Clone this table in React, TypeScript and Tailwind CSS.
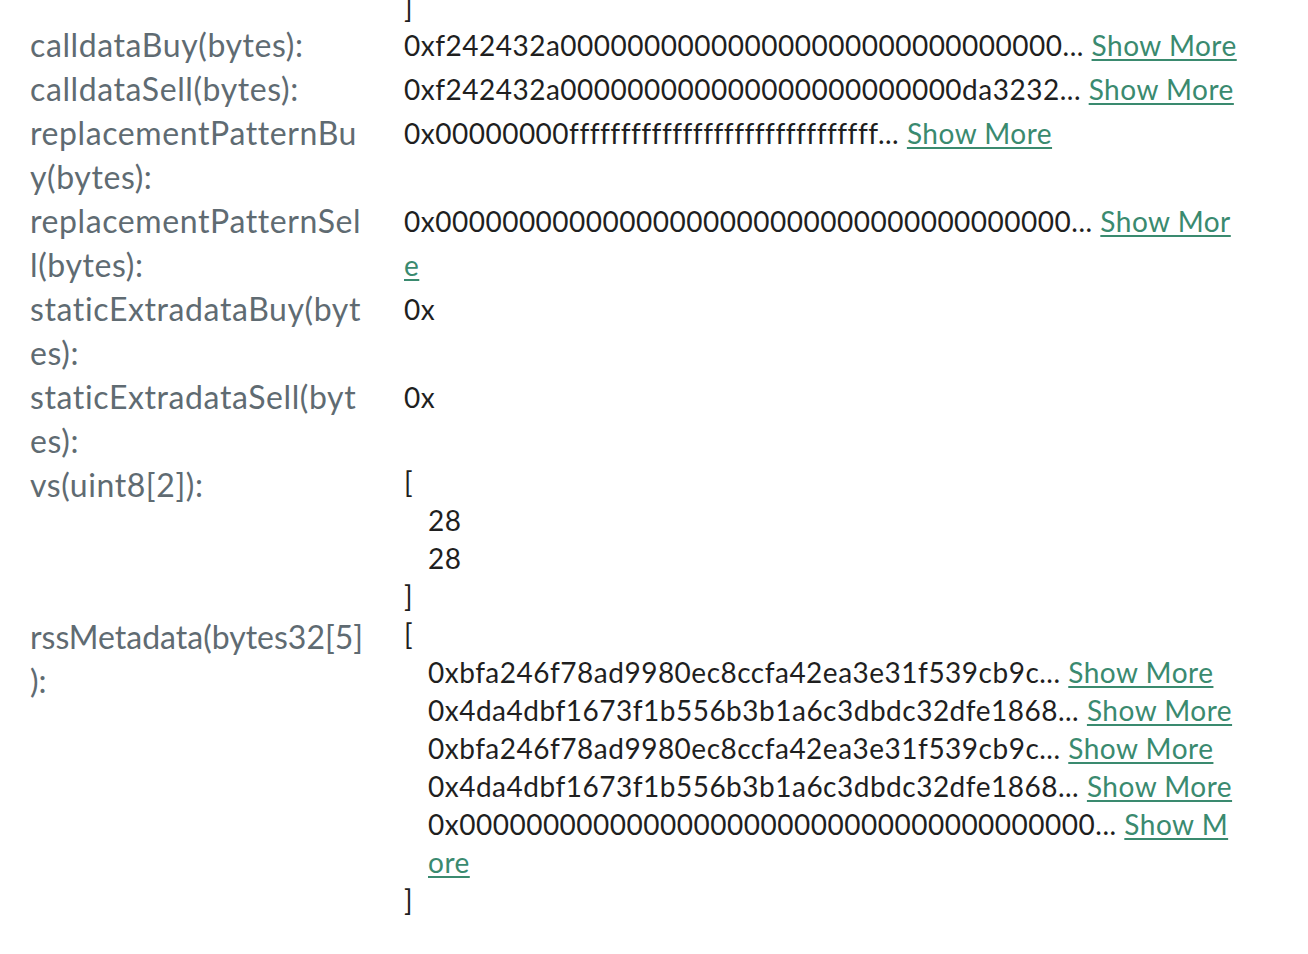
const zeros = (n: number) => '0'.repeat(n);

type Param = {
  label: string;
  value: string | string[];
  tight?: boolean;
};

const params: Param[] = [
  { label: 'calldataBuy(bytes):', value: '0xf242432a' + zeros(54) + '1f2c3a9b' },
  { label: 'calldataSell(bytes):', value: '0xf242432a' + zeros(24) + 'da3232b6c4' + zeros(20) },
  { label: 'replacementPatternBuy(bytes):', value: '0x00000000' + 'f'.repeat(56) },
  { label: 'replacementPatternSell(bytes):', value: '0x' + zeros(64) },
  { label: 'staticExtradataBuy(bytes):', value: '0x' },
  { label: 'staticExtradataSell(bytes):', value: '0x' },
  { label: 'vs(uint8[2]):', value: ['28', '28'] },
  {
    label: 'rssMetadata(bytes32[5]):',
    tight: true,
    value: [
      '0xbfa246f78ad9980ec8ccfa42ea3e31f539cb9c8a2e1b7d04f0',
      '0x4da4dbf1673f1b556b3b1a6c3dbdc32dfe18681c9e2a5b70d3',
      '0xbfa246f78ad9980ec8ccfa42ea3e31f539cb9c8a2e1b7d04f0',
      '0x4da4dbf1673f1b556b3b1a6c3dbdc32dfe18681c9e2a5b70d3',
      '0x' + zeros(64),
    ],
  },
];

function HexValue({ value }: { value: string }) {
  if (value.length <= 42) return <>{value}</>;
  return (
    <>
      {value.slice(0, 40)}...{' '}
      <a href="#" className="text-[#3a8a6f] underline decoration-2 underline-offset-[3px]">
        Show More
      </a>
    </>
  );
}

function ParamRow({ param }: { param: Param }) {
  return (
    <div className="flex">
      <div
        className={`w-[335.5px] shrink-0 [overflow-wrap:anywhere] text-[32px] leading-[44px] text-[#5f6b72] ${
          param.tight ? 'tracking-normal' : 'tracking-[0.6px]'
        }`}
      >
        {param.label}
      </div>
      <div className="ml-[38.5px] w-[835px] break-all text-[28px] leading-[44px] tracking-[0.5px] text-[#1f1f1f]">
        {Array.isArray(param.value) ? (
          <div className="leading-[38px]">
            <div>[</div>
            {param.value.map((v, i) => (
              <div key={i} className="pl-6">
                <HexValue value={v} />
              </div>
            ))}
            <div>]</div>
          </div>
        ) : (
          <HexValue value={param.value} />
        )}
      </div>
    </div>
  );
}

export default function App() {
  return (
    <div className="min-h-screen bg-white pl-[30px] font-['Lato',sans-serif]">
      <div className="overflow-hidden">
        <div className="-mt-[9px] ml-[374px] text-[28px] leading-[32px] text-[#1f1f1f]">]</div>
      </div>
      {params.map((p) => (
        <ParamRow key={p.label} param={p} />
      ))}
    </div>
  );
}
